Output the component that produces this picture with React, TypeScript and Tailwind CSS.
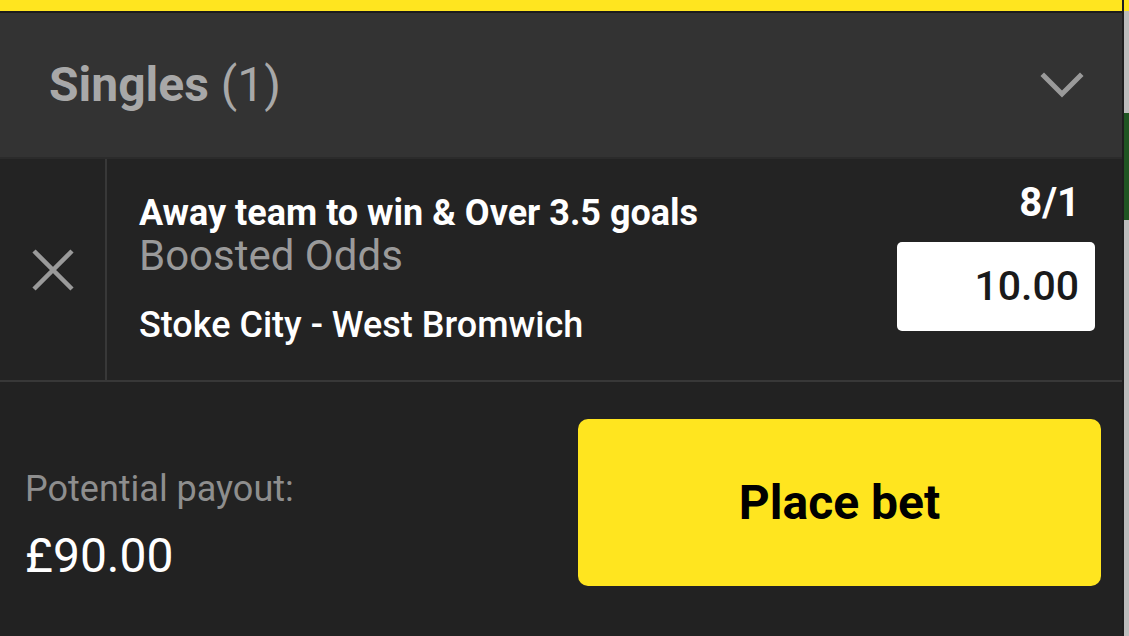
const font = { fontFamily: 'Roboto, "Liberation Sans", sans-serif' };

function Chevron() {
  return (
    <svg width="44" height="28" viewBox="0 0 44 28" fill="none" className="text-[#9a9a9a]">
      <polyline points="4,5 22,23 40,5" stroke="currentColor" strokeWidth="5" strokeLinecap="square" />
    </svg>
  );
}

function CloseIcon() {
  return (
    <svg width="44" height="44" viewBox="0 0 44 44" fill="none" className="text-[#9a9a9a]">
      <path d="M3 3 L41 41 M41 3 L3 41" stroke="currentColor" strokeWidth="4.5" />
    </svg>
  );
}

function Header() {
  return (
    <div className="flex h-[144px] items-center justify-between bg-[#333333] pl-[49px] pr-[38px]">
      <h2 className="text-[48px] leading-none text-[#a8a8a8]">
        <span className="font-bold">Singles</span> <span className="font-normal">(1)</span>
      </h2>
      <Chevron />
    </div>
  );
}

function BetRow() {
  return (
    <div className="flex h-[225px] border-b-2 border-t-2 border-b-[#383838] border-t-[#2b2b2b] bg-[#232323]">
      <button className="flex w-[107px] shrink-0 items-center justify-center border-r-2 border-[#383838]">
        <CloseIcon />
      </button>
      <div className="flex flex-1 flex-col pl-[32px] pt-[34px]">
        <p className="text-[36px] font-bold leading-[40px] text-white">Away team to win &amp; Over 3.5 goals</p>
        <p className="text-[42px] font-normal leading-[46px] text-[#9a9a9a]">Boosted Odds</p>
        <p className="mt-[26px] text-[36px] font-medium leading-[40px] text-white">Stoke City - West Bromwich</p>
      </div>
      <div className="flex flex-col items-end pr-[27px] pt-[22px]">
        <span className="pr-[15px] text-[40px] font-bold leading-[44px] text-white">8/1</span>
        <div className="mt-[17px] flex h-[89px] w-[198px] items-center justify-end rounded-[5px] bg-white pr-[16px]">
          <span className="text-[41px] font-medium text-[#1a1a1a]">10.00</span>
        </div>
      </div>
    </div>
  );
}

function Footer() {
  return (
    <div className="flex flex-1 items-start bg-[#222222] pl-[25px] pr-[21px] pt-[37px]">
      <div className="flex flex-1 flex-col pt-[50px]">
        <span className="text-[36px] font-normal leading-[40px] text-[#8e8e8e]">Potential payout:</span>
        <span className="mt-[22px] text-[48px] font-normal leading-[50px] text-white">£90.00</span>
      </div>
      <button className="flex h-[167px] w-[523px] items-center justify-center rounded-[10px] bg-[#ffe51f] text-[48px] font-bold text-black">
        Place bet
      </button>
    </div>
  );
}

export default function App() {
  return (
    <div className="flex h-[636px] w-[1129px] overflow-hidden bg-[#222222]" style={font}>
      <div className="flex w-[1122px] flex-col">
        <div className="h-[11px] bg-[#ffe51f]" />
        <div className="h-[2px] bg-[#1c1c1c]" />
        <Header />
        <BetRow />
        <Footer />
      </div>
      <div className="w-[2px] bg-[#1e1e1e]" />
      <div className="flex w-[5px] flex-col bg-[#bdbdbd]">
        <div className="h-[11px] bg-[#ffe51f]" />
        <div className="mt-[102px] h-[107px] bg-[#1f5522]" />
      </div>
    </div>
  );
}
